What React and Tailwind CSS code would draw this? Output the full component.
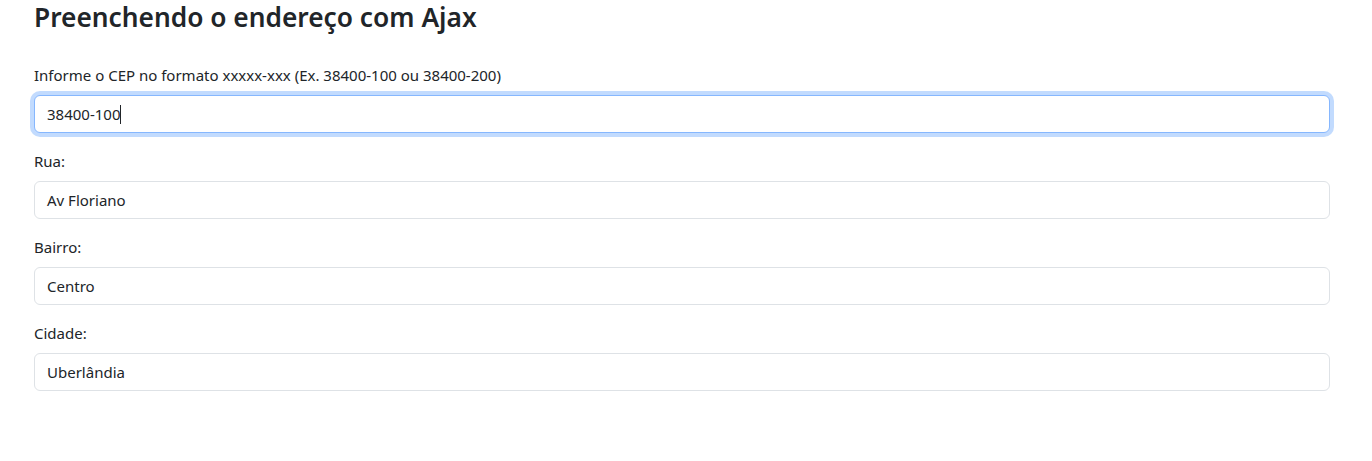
export default function App() {
  const font = { fontFamily: '"Noto Sans", "Open Sans", sans-serif' };
  const Field = ({ label, value, focus }) => (
    <div className="mb-4">
      <div className="h-6 leading-6 mb-2 text-[15px]">{label}</div>
      <div
        className={
          "h-[38px] rounded-[6px] border bg-white pl-3 flex items-center text-[15px] " +
          (focus
            ? "border-[#86b7fe] shadow-[0_0_0_4px_rgba(13,110,253,0.25)]"
            : "border-[#dee2e6]")
        }
      >
        <span>{value}</span>
        {focus && <span className="inline-block w-px h-[19px] bg-[#212529]" />}
      </div>
    </div>
  );
  return (
    <div className="min-h-[461px] bg-white text-[#212529]" style={font}>
      <div className="pl-[34px] w-[1330px]">
        <h3 className="text-[26.3px] font-semibold leading-[34px] pt-0 mb-[29px]">
          Preenchendo o endereço com Ajax
        </h3>
        <Field label="Informe o CEP no formato xxxxx-xxx (Ex. 38400-100 ou 38400-200)" value="38400-100" focus />
        <Field label="Rua:" value="Av Floriano" />
        <Field label="Bairro:" value="Centro" />
        <Field label="Cidade:" value="Uberlândia" />
      </div>
    </div>
  );
}
